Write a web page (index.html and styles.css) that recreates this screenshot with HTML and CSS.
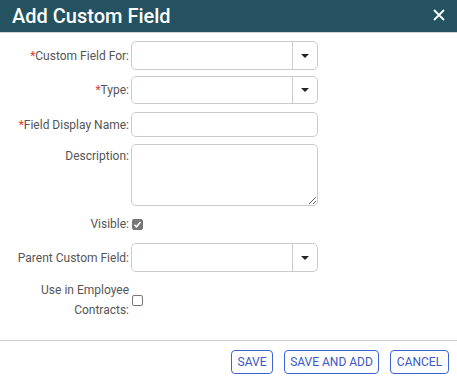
FILE: index.html
```html
<!DOCTYPE html>
<html lang="en">
  <head>
    <meta charset="UTF-8" />
    <title>Add Custom Field</title>
    <link rel="stylesheet" href="styles.css">
  </head>
  <body>
    <div class="dialog">
      <header class="dialog-header">
        <h1>Add Custom Field</h1>
        <button class="close-btn" aria-label="Close">
          <svg width="12" height="12" viewBox="0 0 12 12">
            <path d="M1 1L11 11M11 1L1 11" stroke="#fff" stroke-width="1.8" />
          </svg>
        </button>
      </header>

      <form class="form">
        <div class="row row-select">
          <label><span class="req">*</span>Custom Field For:</label>
          <div class="select"><span class="select-value"></span><span class="caret"></span></div>
        </div>
        <div class="row row-select row-type">
          <label><span class="req">*</span>Type:</label>
          <div class="select"><span class="select-value"></span><span class="caret"></span></div>
        </div>
        <div class="row row-text">
          <label><span class="req">*</span>Field Display Name:</label>
          <input type="text" class="text-input" />
        </div>
        <div class="row row-area">
          <label>Description:</label>
          <textarea class="text-area"></textarea>
        </div>
        <div class="row row-check">
          <label>Visible:</label>
          <span class="check checked">
            <svg width="9" height="9" viewBox="0 0 9 9">
              <path d="M1.5 4.8L3.5 6.8L7.5 2" stroke="#fff" stroke-width="1.6" fill="none" />
            </svg>
          </span>
        </div>
        <div class="row row-select row-parent">
          <label>Parent Custom Field:</label>
          <div class="select"><span class="select-value"></span><span class="caret"></span></div>
        </div>
        <div class="row row-contracts">
          <label>Use in Employee<br />Contracts:</label>
          <span class="check"></span>
        </div>
      </form>

      <footer class="dialog-footer">
        <button class="btn btn-save">SAVE</button>
        <button class="btn btn-save-add">SAVE AND ADD</button>
        <button class="btn btn-cancel">CANCEL</button>
      </footer>
    </div>
  </body>
</html>
```

FILE: styles.css
```css
* {
  margin: 0;
  padding: 0;
  box-sizing: border-box;
}
html,
body {
  height: 100%;
  background: #fff;
  font-family: Roboto, "Liberation Sans", sans-serif;
}

.dialog {
  width: 457px;
  height: 381px;
  display: flex;
  flex-direction: column;
}

/* Header */
.dialog-header {
  height: 33px;
  background: #245260;
  border-bottom: 1px solid #d0d0d0;
  display: flex;
  align-items: center;
  justify-content: space-between;
  padding: 0 12px 0 12px;
}
.dialog-header h1 {
  color: #fff;
  font-size: 20px;
  font-weight: 500;
  line-height: 32px;
  margin-top: -1px;
}
.close-btn {
  background: none;
  border: none;
  width: 12px;
  height: 12px;
  display: flex;
  margin-top: -2px;
}

/* Form */
.form {
  flex: 1;
  padding: 8px 0 0 6px;
}
.row {
  display: grid;
  grid-template-columns: 123px 187px;
  column-gap: 2px;
  align-items: center;
}
.row label {
  text-align: right;
  font-size: 12px;
  color: #555;
  line-height: 20px;
}
.req {
  color: #e53935;
}

.select {
  height: 29px;
  border: 1px solid #ccc;
  border-radius: 5px;
  display: flex;
}
.select-value {
  flex: 1;
  border-right: 1px solid #ccc;
}
.caret {
  width: 24px;
  display: flex;
  align-items: center;
  justify-content: center;
}
.caret::before {
  content: "";
  border-left: 4px solid transparent;
  border-right: 4px solid transparent;
  border-top: 4px solid #222;
}
.row-type {
  margin-top: 6px;
  height: 28px;
}
.row-type .select {
  height: 28px;
}

.row-text {
  margin-top: 8px;
}
.text-input {
  height: 25px;
  border: 1px solid #ccc;
  border-radius: 5px;
}

.row-area {
  margin-top: 7px;
  align-items: start;
}
.row-area label {
  padding-top: 2px;
}
.text-area {
  height: 62px;
  border: 1px solid #ccc;
  border-radius: 5px;
  resize: vertical;
  font-family: inherit;
}

.row-check {
  margin-top: 6px;
  height: 24px;
}
.check {
  width: 11px;
  height: 11px;
  border: 1px solid #777;
  border-radius: 2px;
  margin-left: 1px;
  display: flex;
  align-items: center;
  justify-content: center;
}
.check.checked {
  background: #777;
}

.row-parent {
  margin-top: 7px;
}

.row-contracts {
  margin-top: 8px;
}

/* Footer */
.dialog-footer {
  height: 41px;
  border-top: 1px solid #cfcfcf;
  display: flex;
  justify-content: flex-end;
  align-items: center;
  gap: 11px;
  padding: 2px 8px 0 0;
}
.btn {
  height: 24px;
  padding: 0;
  background: #fff;
  border: 1px solid #3d63d6;
  border-radius: 4px;
  color: #3d57c7;
  font-family: inherit;
  font-size: 12px;
}
.btn-save {
  width: 42px;
}
.btn-save-add {
  width: 95px;
}
.btn-cancel {
  width: 59px;
}
```
